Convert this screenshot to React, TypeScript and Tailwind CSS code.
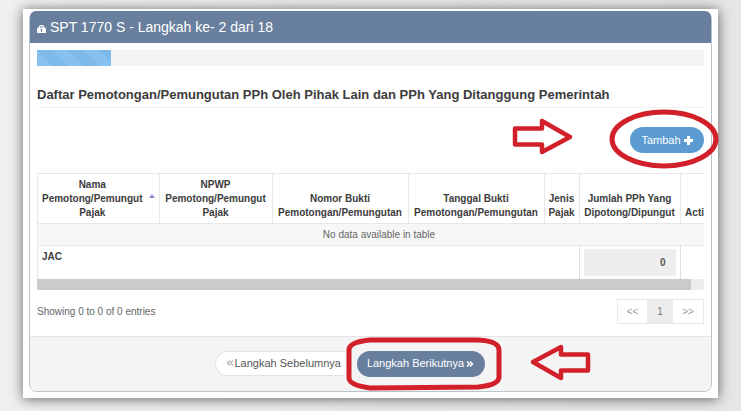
import {clsx} from "clsx"

type Column = {
  title: string[]
  width?: string
  sorted?: boolean
}

const columns: Column[] = [
  {title: ["Nama", "Pemotong/Pemungut", "Pajak"], width: "w-[121px]", sorted: true},
  {title: ["NPWP", "Pemotong/Pemungut", "Pajak"], width: "w-[113px]"},
  {title: ["Nomor Bukti", "Pemotongan/Pemungutan"], width: "w-[136px]"},
  {title: ["Tanggal Bukti", "Pemotongan/Pemungutan"], width: "w-[136px]"},
  {title: ["Jenis", "Pajak"], width: "w-[35px]"},
  {title: ["Jumlah PPh Yang", "Dipotong/Dipungut"], width: "w-[101px]"},
  {title: ["Acti"]},
]

const Arrow = ({className}: {className?: string}) => (
  <svg viewBox="0 0 62 38" className={clsx("h-[38px] w-[62px] shrink-0", className)} fill="none" aria-hidden>
    <path d="M3 10.500H30V3L58 19L30 34V26.500H3Z" stroke="#d2202b" strokeWidth="4.500" strokeLinejoin="round" />
  </svg>
)

const DoubleChevron = ({className}: {className?: string}) => (
  <svg viewBox="0 0 8 8" className={clsx("h-2 w-2 shrink-0", className)} fill="none" aria-hidden>
    <path d="M1 1.500L3.500 4L1 6.500M4 1.500L6.500 4L4 6.500" stroke="currentColor" strokeWidth="1.500" />
  </svg>
)

const PanelHeader = () => (
  <header className="flex h-8 items-center gap-1 rounded-t-md bg-[#687f9e] px-[7px] text-white">
    <svg viewBox="0 0 9 8" className="mt-1 h-2 w-[9px]" aria-hidden>
      <path d="M1.500 2.500Q1.500 0 4.500 0T7.500 2.500L9 3.500V8H0V3.500Z" fill="#fff" />
      <path d="M3 2h3M3.500 5l1-1v3" fill="none" stroke="#687f9e" />
    </svg>
    <h1 className="text-[14px] leading-5">SPT 1770 S - Langkah ke- 2 dari 18</h1>
  </header>
)

const Progress = () => (
  <div
    role="progressbar"
    aria-label="Langkah"
    aria-valuenow={2}
    aria-valuemin={0}
    aria-valuemax={18}
    className="h-4 bg-[#f4f4f4]"
  >
    <div className="h-full w-1/9 bg-[repeating-linear-gradient(45deg,#87c1ef_0_11px,#7dbaea_11px_22px)]" />
  </div>
)

const TaxTable = () => (
  <div>
    <div className="border-l border-[#e8e8e8]">
      <table className="w-full table-fixed border-collapse text-[10px] leading-[14px]">
        <thead>
          <tr className="h-[50px] border-y border-[#e8e8e8]">
            {columns.map((column, i) => (
              <th
                key={i}
                scope="col"
                aria-sort={column.sorted ? "ascending" : undefined}
                className={clsx(
                  "relative border-r border-[#e8e8e8] p-0 pb-[3px] align-bottom font-bold whitespace-nowrap last:border-r-0 last:text-right",
                  column.width,
                  column.sorted && "pr-3"
                )}
              >
                {column.title.map(line => (
                  <span key={line} className="block">
                    {line}
                  </span>
                ))}
                {column.sorted && (
                  <span
                    className="absolute top-5 right-1 border-x-3 border-b-4 border-x-transparent border-b-[#8a8cd6]"
                    aria-hidden
                  />
                )}
              </th>
            ))}
          </tr>
        </thead>
        <tbody>
          <tr className="h-[22px] border-b border-[#e8e8e8] bg-[#f7f7f7]">
            <td colSpan={7} className="py-0 pr-0 pl-4 text-center text-[#666]">
              No data available in table
            </td>
          </tr>
          <tr className="h-[33px]">
            <th scope="row" colSpan={5} className="border-r border-[#e0e0e0] px-1 pt-1 pb-0 text-left align-top">
              JAC
            </th>
            <td className="border-r border-[#e0e0e0] px-1 py-0">
              <input
                aria-label="Jumlah PPh"
                value="0"
                readOnly
                className="block h-[27px] w-full bg-[#eee] px-[10px] text-right font-bold text-[#555]"
              />
            </td>
            <td />
          </tr>
        </tbody>
      </table>
    </div>
    <div className="h-[11px] bg-[#ececec]">
      <div className="h-full w-[98%] bg-[#cbcbcb]" />
    </div>
  </div>
)

const Pagination = () => (
  <nav aria-label="Pagination" className="flex h-[25px] border border-[#e8e8e8] text-[10px] text-[#999]">
    <button className="w-[29px]">&lt;&lt;</button>
    <button aria-current="page" className="w-[26px] bg-[#ececec] text-[#777]">
      1
    </button>
    <button className="w-[30px]">&gt;&gt;</button>
  </nav>
)

const PanelFooter = () => (
  <footer className="flex h-[55px] items-start justify-center gap-3 rounded-b-md border-t border-[#e4e4e4] bg-[#f4f4f4] pt-[14px] pr-[42px] text-[11px]">
    <button className="flex h-[25px] w-[130px] items-center gap-px rounded-l-full border border-r-0 border-[#e2e2e2] bg-white pl-[10px] whitespace-nowrap text-[#555]">
      <DoubleChevron className="rotate-180 text-[#bbb]" />
      Langkah Sebelumnya
    </button>
    <div className="relative">
      <button className="flex h-[26px] w-[128px] items-center justify-center gap-[2px] rounded-full bg-[#687f9e] whitespace-nowrap text-white">
        Langkah Berikutnya
        <DoubleChevron />
      </button>
      <svg
        viewBox="0 0 156 54"
        className="pointer-events-none absolute -top-[14px] -left-[11px] h-[54px] w-[156px] max-w-none"
        fill="none"
        aria-hidden
      >
        <path
          d="M24 3H132Q153 4 153 13V40Q153 48 132 50L24 51Q3 48 3 41V13Q3 5 24 3Z"
          stroke="#d2202b"
          strokeWidth="5"
        />
      </svg>
      <Arrow className="absolute -top-2 left-[172px] rotate-180" />
    </div>
  </footer>
)

const App = () => {
  return (
    <main className="min-h-screen bg-linear-to-r from-[#f0f0f0] to-[#e6e6e6] px-[23px] pt-[9px] pb-3 font-['Liberation_Sans',Arial,sans-serif] text-[#3c3c3c]">
      <div className="bg-white px-[6px] pt-[2px] pb-[6px] shadow-[0_1px_12px_rgba(0,0,0,0.6)]">
        <section className="rounded-lg border border-t-0 border-[#b9c5cc]">
          <PanelHeader />
          <div className="px-[7px] pt-[7px] pb-3">
            <Progress />
            <h2 className="mt-5 border-b border-[#f2f2f2] pb-[3px] text-[13px] leading-[18px] font-bold">
              Daftar Pemotongan/Pemungutan PPh Oleh Pihak Lain dan PPh Yang Ditanggung Pemerintah
            </h2>
            <div className="flex items-start justify-end gap-14 pt-[10px] pb-[17px]">
              <Arrow />
              <div className="relative mt-[9px]">
                <button className="flex h-[26px] w-[74px] items-center justify-center gap-[3px] rounded-full bg-[#5b9bd1] text-[11px] text-white">
                  Tambah
                  <svg viewBox="0 0 9 9" className="h-[9px] w-[9px]" aria-hidden>
                    <path d="M4.500 0V9M0 4.500H9" stroke="#fff" strokeWidth="3" />
                  </svg>
                </button>
                <svg
                  viewBox="0 0 110 60"
                  className="pointer-events-none absolute -top-[18px] -left-[21px] h-[60px] w-[110px] max-w-none"
                  fill="none"
                  aria-hidden
                >
                  <ellipse cx="55" cy="30" rx="52" ry="27" stroke="#d2202b" strokeWidth="5" />
                </svg>
              </div>
            </div>
            <TaxTable />
            <div className="mt-[9px] flex items-center justify-between">
              <p className="text-[10px] text-[#666]">Showing 0 to 0 of 0 entries</p>
              <Pagination />
            </div>
          </div>
          <PanelFooter />
        </section>
      </div>
    </main>
  )
}

export default App
